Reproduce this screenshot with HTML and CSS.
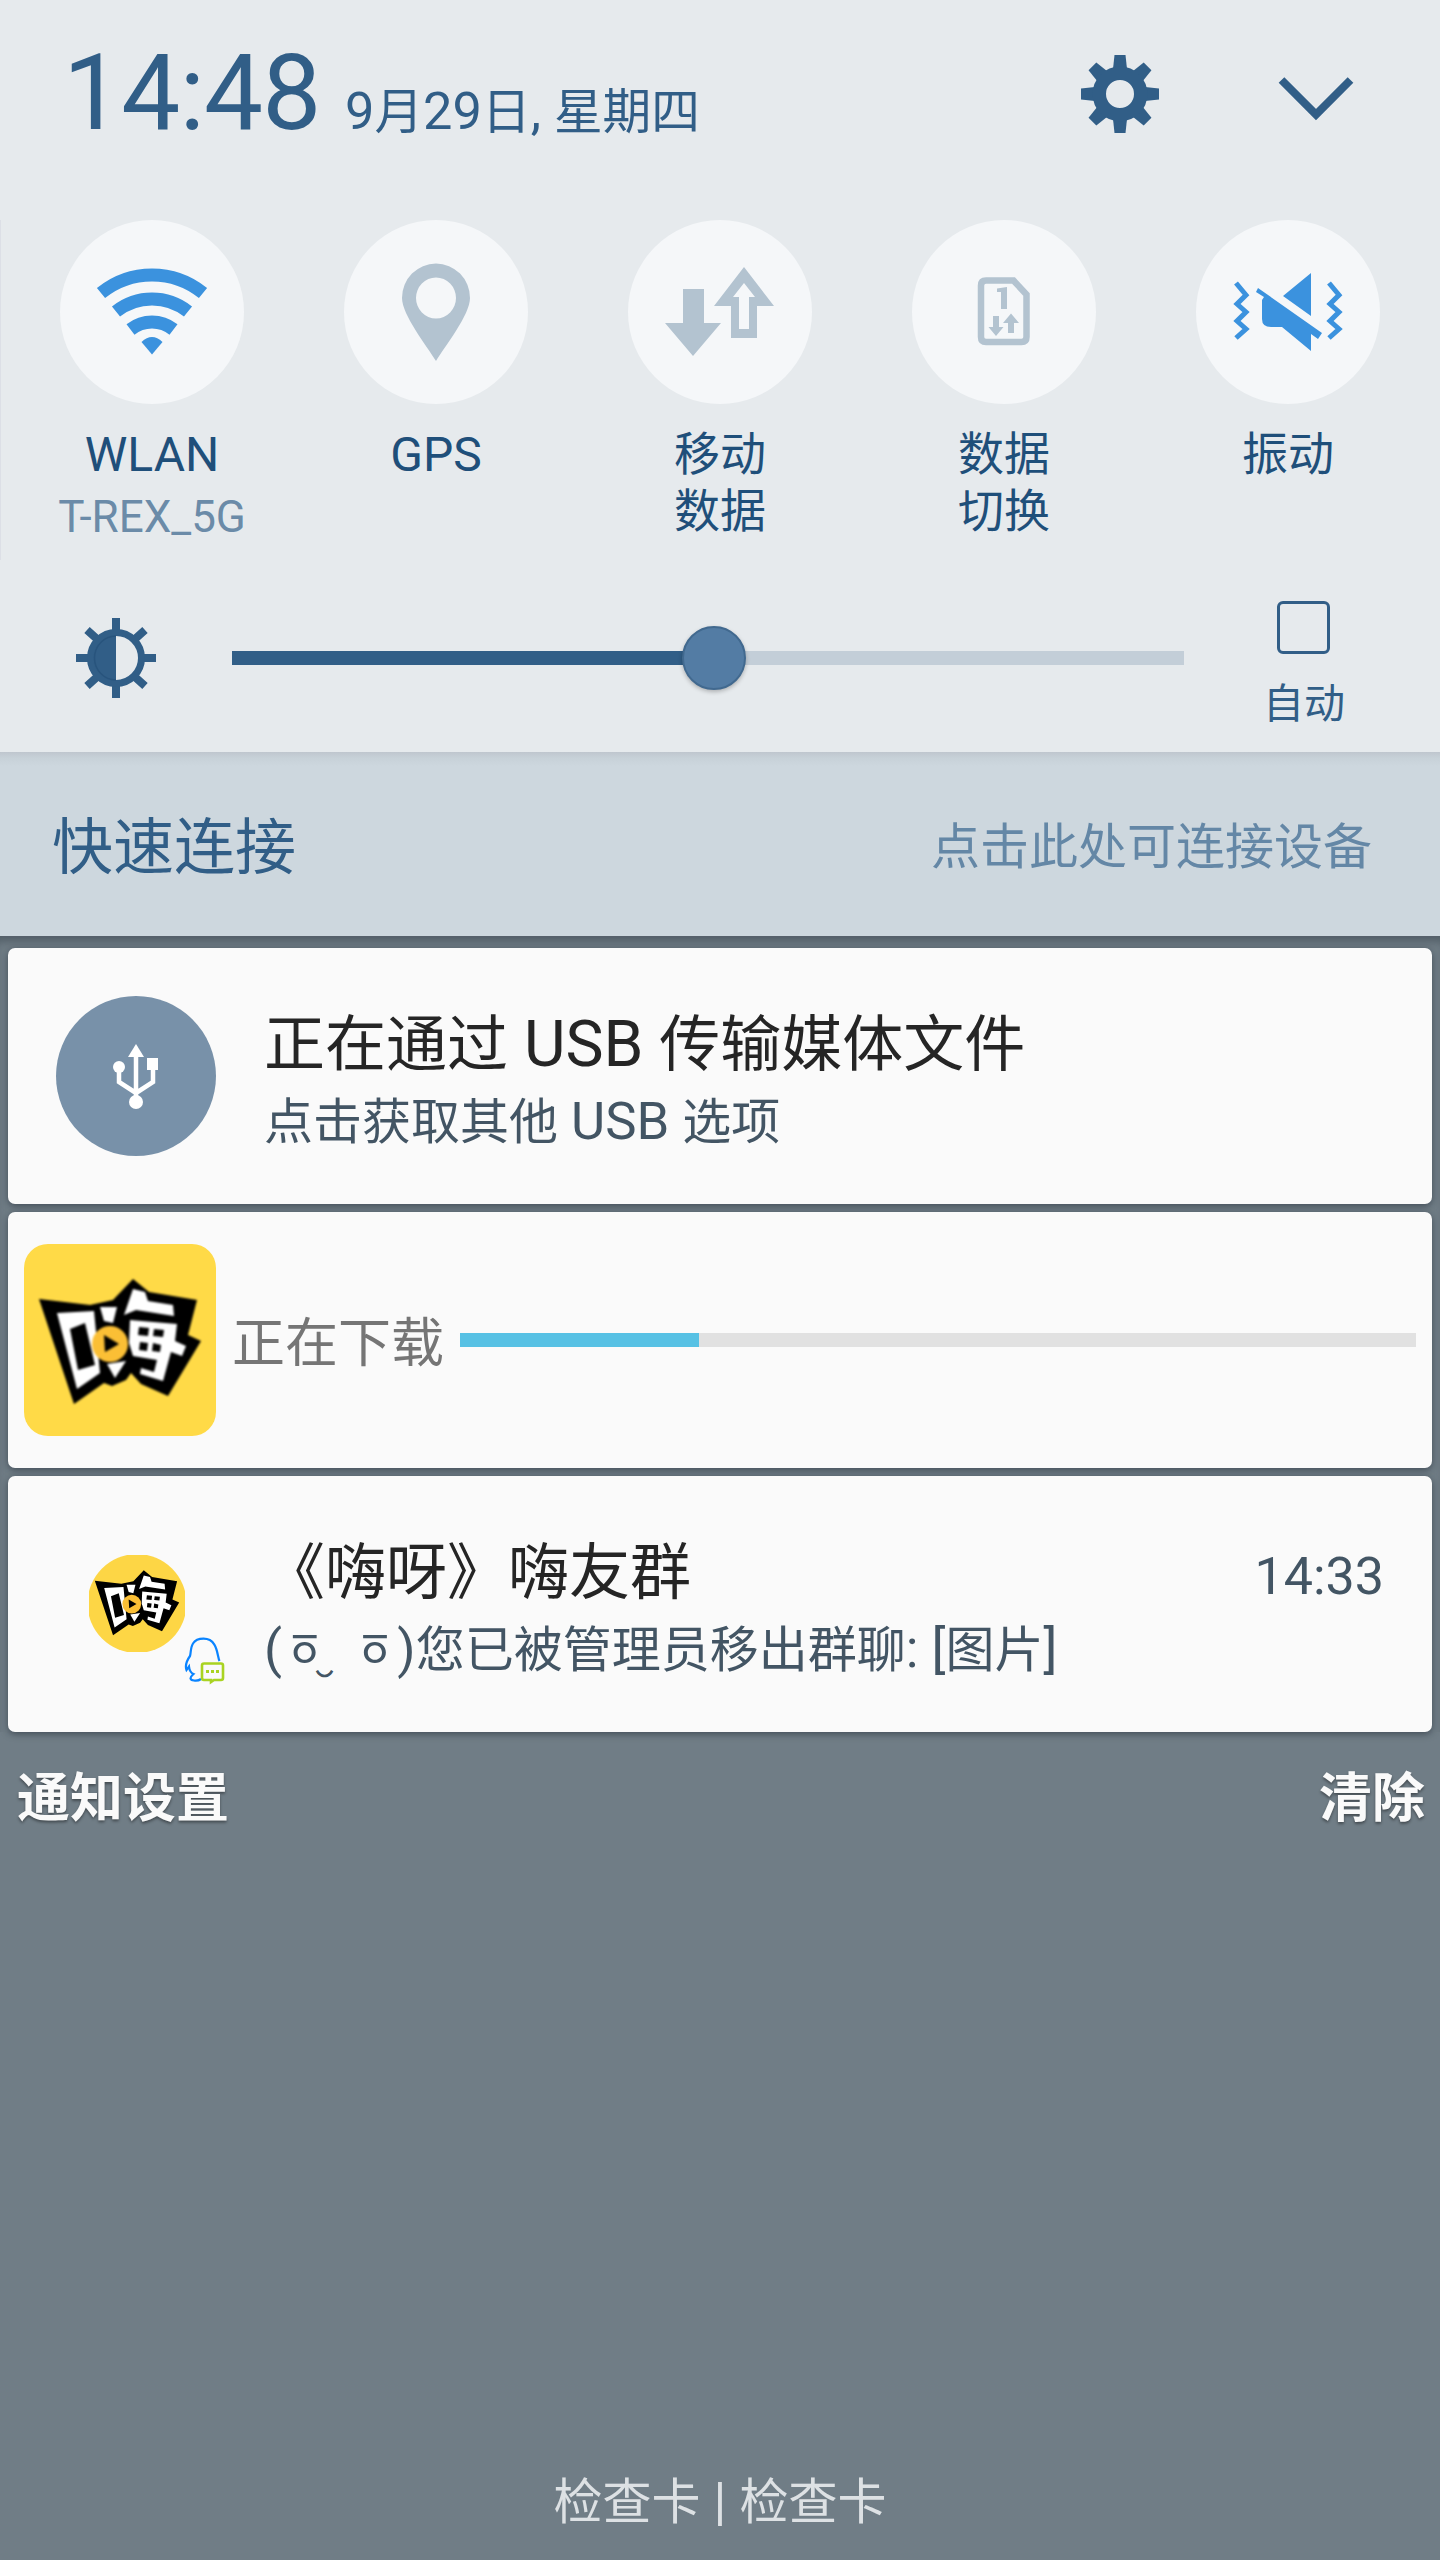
FILE: index.html
```html
<!DOCTYPE html>
<html lang="zh-CN">
<head>
<meta charset="utf-8">
<title>通知面板</title>
<link rel="stylesheet" href="styles.css">
</head>
<body>
<svg class="defs" width="0" height="0" aria-hidden="true">
  <symbol id="hi-logo" viewBox="0 0 192 192">
    <path d="M15 55 66 61 89 56 109 35 125 48 173 56 164 91 177 97 144 152 117 140 107 129 102 136 88 142 80 139 50 160Z" fill="#000"/>
    <g fill="#fff">
      <path fill-rule="evenodd" d="M33 69 70 67 76 129 53 145ZM46 85 54 126 71 121 61 79Z"/>
      <path d="M76 63 93 63 89 79 80 77Z"/>
      <path d="M83 120 102 117 91 134Z"/>
      <path d="M109 45 121 48 124 57 149 61 150 72 112 66 100 71Z"/>
      <path fill-rule="evenodd" d="M106 76 153 80 151 97 162 102 158 112 147 108 139 137 116 130 117 124 130 128 133 116 109 112 105 99ZM115 83 114 91 124 92 125 84ZM130 85 129 92 139 93 140 86ZM116 98 115 106 123 107 124 99ZM129 99 128 107 136 108 137 101Z"/>
    </g>
    <circle cx="86" cy="100" r="18" fill="#fbbf35"/>
    <path d="M80 91 95 100 81 108Z" fill="#000"/>
  </symbol>
</svg>

<section class="quick">
  <header class="top">
    <span class="time">14:48</span>
    <span class="date"><span class="n">9</span>月<span class="n">29</span>日<span class="n">, </span>星期四</span>
    <svg class="gear" viewBox="-39 -39 78 78" width="78" height="78">
      <g fill="#315e87">
        <path id="t" d="M-7-25-5.5-39H5.5L7-25Z"/>
        <use href="#t" transform="rotate(45)"/><use href="#t" transform="rotate(90)"/><use href="#t" transform="rotate(135)"/>
        <use href="#t" transform="rotate(180)"/><use href="#t" transform="rotate(225)"/><use href="#t" transform="rotate(270)"/><use href="#t" transform="rotate(315)"/>
      </g>
      <circle r="20.7" fill="none" stroke="#315e87" stroke-width="13.4"/>
    </svg>
    <svg class="chevron" viewBox="0 0 76 46" width="76" height="46"><path d="M3.5 4 38 38.500 72.500 4" fill="none" stroke="#315e87" stroke-width="8"/></svg>
  </header>

  <div class="toggles">
    <div class="toggle">
      <div class="disc"><svg viewBox="-92 -92 184 184" width="184" height="184">
        <g fill="none" stroke="#3b92de" stroke-width="13">
          <path d="M-51-19A81 81 0 0 1 51-19"/><path d="M-36-.5A58 58 0 0 1 36-.5"/><path d="M-21.500 17.500A35 35 0 0 1 21.500 17.500"/>
        </g>
        <path d="M-10.500 30Q0 20 10.500 30L0 42.500Z" fill="#3b92de"/>
      </svg></div>
      <span class="label latin">WLAN</span><span class="sub">T-REX_5G</span>
    </div>
    <div class="toggle">
      <div class="disc"><svg viewBox="-92 -92 184 184" width="184" height="184">
        <path fill-rule="evenodd" d="M0 49C-9 34-34 3-34-14A34 34.500 0 0 1 34-14C34 3 9 34 0 49ZM-20-14A20 20.500 0 0 0 20-14 20 20.500 0 0 0-20-14Z" fill="#b3c3d0"/>
      </svg></div>
      <span class="label latin">GPS</span>
    </div>
    <div class="toggle">
      <div class="disc"><svg viewBox="-92 -92 184 184" width="184" height="184">
        <path d="M-37-23H-16V11H1L-27 44-55 11H-37ZM24-45 54-6H37V26H11V-6H-6ZM24-29 13-15H19V17H29V-15H35Z" fill="#b3c3d0" fill-rule="evenodd"/>
      </svg></div>
      <span class="label">移动<br>数据</span>
    </div>
    <div class="toggle">
      <div class="disc"><svg viewBox="-92 -92 184 184" width="184" height="184">
        <path d="M-18-31.500H9.500L22.500-17.500V25Q22.500 30 17.500 30H-18Q-23 30-23 25V-26.500Q-23-31.500-18-31.500Z" fill="none" stroke="#b3c3d0" stroke-width="6.500"/>
        <path d="M-7-23.500 3-25V-3H-3V-20H-7ZM-11 4H-5V15H-.5L-8 24-15.500 15H-11ZM7 1.500 15 11H10V21H4V11H-1Z" fill="#b3c3d0"/>
      </svg></div>
      <span class="label">数据<br>切换</span>
    </div>
    <div class="toggle">
      <div class="disc"><svg viewBox="-92 -92 184 184" width="184" height="184">
        <g fill="#3b92de"><path d="M-30-24 34 21 30 27 23 22V39L-6 15H-17Q-26 15-26 7V-12L-24-15-32-20ZM23-39V4L-5-16Z"/></g>
        <path d="M-52-29-42-17-51-8-42 0-51 9-42 17-52 26M41-29 51-17 42-8 51 0 42 9 51 17 41 26" fill="none" stroke="#3b92de" stroke-width="5"/>
      </svg></div>
      <span class="label">振动</span>
    </div>
  </div>

  <div class="brightness">
    <svg class="sun" viewBox="-41 -41 82 82" width="82" height="82">
      <path d="M0-40V-26M0 26V40M-40 0H-26M26 0H40M-29-28-19-19M29-28 19-19M-29 28-19 19M29 28 19 19" stroke="#315e87" stroke-width="8"/>
      <circle r="25.500" fill="none" stroke="#315e87" stroke-width="7"/>
      <path d="M0-23A23 23 0 0 0 0 23Z" fill="#315e87"/>
      <path d="M0-22A21.500 22 0 0 0 0 22" fill="none" stroke="#28547d" stroke-width="1.500"/>
    </svg>
    <div class="track"><div class="fill"></div><div class="thumb"></div></div>
    <div class="auto"><span class="check"></span><span>自动</span></div>
  </div>
</section>

<section class="connect"><span class="c-title">快速连接</span><span class="c-hint">点击此处可连接设备</span></section>

<main class="list">
  <article class="card usb">
    <div class="usb-icon"><svg viewBox="-80 -80 160 160" width="160" height="160">
      <g fill="none" stroke="#fff" stroke-width="4.500"><path d="M0-22V26M-17-10V6L0 17M17-10V6L0 17"/></g>
      <g fill="#fff"><path d="M0-32 8-19H-8Z"/><circle cx="-17" cy="-9" r="6"/><path d="M11-18H22V-6H11Z"/><circle cy="26" r="7"/></g>
    </svg></div>
    <div class="texts"><span class="title">正在通过<span class="n"> USB </span>传输媒体文件</span><span class="body">点击获取其他<span class="n"> USB </span>选项</span></div>
  </article>
  <article class="card download">
    <div class="app"><svg class="soft" width="192" height="192"><use href="#hi-logo"/></svg></div>
    <span class="d-label">正在下载</span>
    <div class="progress"><div class="done"></div></div>
  </article>
  <article class="card chat">
    <div class="avatar">
      <svg class="face" viewBox="1 0 96 97" width="96" height="97"><circle cx="49" cy="48.500" r="49.500" fill="#fdd645"/><use href="#hi-logo" x="-1" y="-3" width="100" height="100"/></svg>
      <svg class="badge" viewBox="0 0 44 50" width="44" height="50">
        <path d="M35.500 24C33 19 34 1.700 19.500 1.700 5 1.700 7.500 15 6 19 2.500 24 1 29 2.500 33L5 29.500C5.500 34 7 36 9.500 37 5 41 6 43 10 43.500 13 44 15 43.500 17 42" fill="none" stroke="#0a84ff" stroke-width="2.200"/>
        <path d="M20 26.500H37Q39 26.500 39 28.500V41Q39 43 37 43H30L27 45V43H20Q18 43 18 41V28.500Q18 26.500 20 26.500Z" fill="#fafafa" stroke="#a9d321" stroke-width="2.600"/>
        <path d="M22 33H25V36H22ZM27 33H30V36H27ZM32 33H35V36H32Z" fill="#a9d321"/>
      </svg>
    </div>
    <div class="texts"><div class="row"><span class="title">《嗨呀》嗨友群</span><span class="when">14:33</span></div><span class="body"><span class="n">(</span>ㆆ<span class="tie">‿</span><span class="n"> </span>ㆆ<span class="n">)</span>您已被管理员移出群聊<span class="n">: [</span>图片<span class="n">]</span></span></div>
  </article>
</main>
<div class="actions"><span>通知设置</span><span>清除</span></div>
<footer class="carrier">检查卡<span class="n"> | </span>检查卡</footer>
</body>
</html>
```
FILE: styles.css
```css
* { box-sizing: border-box; }
body {
  margin: 0; width: 1440px; height: 2560px; overflow: hidden;
  display: flex; flex-direction: column;
  background: #707d86;
  font-family: Roboto, "Noto Sans CJK SC", sans-serif;
  white-space: nowrap;
}
svg { display: block; flex: none; }
.defs { position: absolute; }
/* Latin runs are set slightly larger than the Chinese text around them */
.n { font-size: 1.075em; line-height: 1; white-space: pre; }
.title .n { font-size: 1.05em; }

.quick { height: 752px; background: #e6eaed; color: #315e87; }
.top { height: 220px; padding-left: 63px; display: flex; align-items: baseline; }
.time { font-size: 105px; line-height: 188px; width: 282px; letter-spacing: -.8px; }
.date { font-size: 48.7px; width: 736px; }
.gear { align-self: flex-start; margin-top: 55px; }
.chevron { align-self: flex-start; margin: 76px 0 0 119px; }

.toggles { height: 370px; padding: 0 10px; display: grid; grid-template-columns: repeat(5, 284px); background: linear-gradient(#dcdfe6, #dcdfe6) 0 0 / 1px 340px no-repeat; }
.toggle { display: flex; flex-direction: column; align-items: center; }
.disc { width: 184px; height: 184px; border-radius: 50%; background: #f5f7f9; }
.label { margin-top: 22px; font-size: 46px; line-height: 57px; color: #1f4f7a; text-align: center; }
.latin { font-size: 48px; }
.sub { font-size: 44px; line-height: 52px; margin-top: 8px; color: #6b8ba8; }

.brightness { height: 162px; display: flex; padding-left: 75px; }
.sun { margin-top: 27px; }
.track { width: 952px; height: 14px; margin: 61px 0 0 75px; background: #c3ced8; position: relative; }
.fill { width: 480px; height: 14px; background: #315e87; }
.thumb { position: absolute; left: 450px; top: -25px; width: 64px; height: 64px; border-radius: 50%; background: #537ca4; border: 2px solid #41698f; box-shadow: 0 2px 4px rgba(0,0,0,.25); }
.auto { width: 120px; margin: 11px 0 0 60px; display: flex; flex-direction: column; align-items: center; font-size: 41px; line-height: 48px; }
.check { width: 53px; height: 53px; border: 3px solid #315e87; border-radius: 6px; margin: 0 2px 26px 0; }

.connect { height: 184px; padding: 0 68px 4px 52px; display: flex; justify-content: space-between; align-items: center; background: linear-gradient(#bfc6ce, #c7d1d8 6px, #cdd7de 14px); color: #315e87; }
.c-title { font-size: 61px; }
.c-hint { font-size: 49px; color: #6487a6; }

.list { padding: 12px 8px 0; display: flex; flex-direction: column; gap: 8px; box-shadow: inset 0 10px 8px -4px rgba(30,40,50,.35); }
.card { height: 256px; border-radius: 7px; background: #fafafa; display: flex; box-shadow: 0 2px 7px rgba(20,30,40,.5); }
.texts { display: flex; flex-direction: column; }
.title { font-size: 61px; line-height: 72px; color: #252525; }
.body { font-size: 49px; line-height: 58px; color: #435564; }
.usb { padding: 48px 0 0 48px; }
.usb-icon { width: 160px; height: 160px; border-radius: 50%; background: #7891a9; }
.usb .texts { padding: 13px 0 0 48px; gap: 13px; }
.download { align-items: center; padding: 0 16px; }
.app { width: 192px; height: 192px; border-radius: 24px; background: #ffda47; }
.soft { filter: blur(1px); }
.d-label { font-size: 53px; color: #757575; margin: -2px 0 0 16px; width: 228px; }
.progress { width: 956px; height: 14px; background: #e1e1e1; }
.done { width: 239px; height: 14px; background: #57c1e4; }
.chat { padding: 61px 48px 0 80px; }
.avatar { width: 176px; position: relative; }
.face { margin: 18px 0 0 1px; }
.badge { position: absolute; left: 96px; top: 100px; }
.chat .texts { flex: 1; gap: 13px; }
.row { display: flex; justify-content: space-between; align-items: center; }
.when { font-size: 52px; color: #435564; line-height: 62px; margin-top: 8px; }
.tie { display: inline-block; width: 12px; font-size: .57em; line-height: 1; text-indent: -11px; position: relative; top: 3px; -webkit-text-stroke: 1.2px #435564; }

.actions { height: 134px; padding: 0 15px 11px 17px; display: flex; justify-content: space-between; align-items: center; font-size: 53px; font-weight: 700; color: #fafafa; text-shadow: 0 2px 3px rgba(0,0,0,.4); }
.carrier { margin-top: auto; height: 116px; line-height: 118px; text-align: center; font-size: 49px; color: #dde1e4; }
```
